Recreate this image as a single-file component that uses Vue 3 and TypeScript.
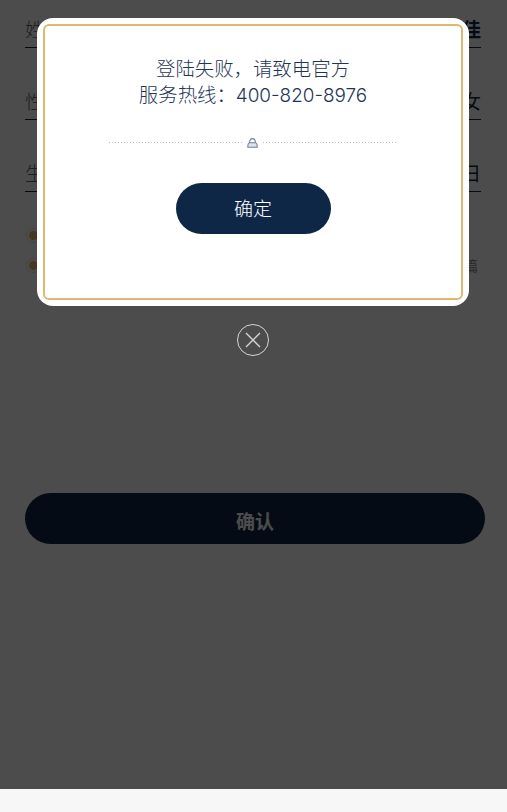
<script setup lang="ts">
const rows = [
  { label: '姓名', value: '王佳', strong: true },
  { label: '性别', value: '女', strong: false },
  { label: '生日', value: '1990年1月1日', strong: false },
]
const agreements = ['我已阅读并同意《用户服务协议》', '我已阅读并同意《隐私保护政策》全篇']
</script>

<template>
  <div class="page">
    <form class="form">
      <div v-for="row in rows" :key="row.label" class="row">
        <span class="label">{{ row.label }}</span>
        <span class="value" :class="{ strong: row.strong }">{{ row.value }}</span>
      </div>
      <div class="agreements">
        <div v-for="a in agreements" :key="a" class="agreement">
          <span class="radio"><span class="dot"></span></span>
          <span class="agreement-text">{{ a }}</span>
        </div>
      </div>
      <button type="button" class="submit">确认</button>
    </form>

    <div class="overlay">
      <div class="dialog">
        <div class="dialog-inner">
          <p class="message">登陆失败，请致电官方<br />服务热线：<span class="phone">400-820-8976</span></p>
          <div class="divider">
            <span class="dots"></span>
            <svg class="bell" width="11" height="10" viewBox="0 0 11 10" fill="none">
              <path d="M2.4 5 L2.9 2.6 Q3.4 .6 5.5 .6 Q7.6 .6 8.1 2.6 L8.6 5" stroke="#71809a" stroke-width="1.1" />
              <path d="M.8 9.2 Q.8 5 2.4 4.7 H8.6 Q10.2 5 10.2 9.2 Z" fill="#dfe3e9" stroke="#71809a" stroke-width="1.1" />
            </svg>
            <span class="dots"></span>
          </div>
          <button type="button" class="ok">确定</button>
        </div>
      </div>
      <button type="button" class="close" aria-label="关闭">
        <svg width="16" height="16" viewBox="0 0 16 16" fill="none">
          <path d="M1 1 L15 15 M15 1 L1 15" stroke="#d4d4d4" stroke-width="1.4" />
        </svg>
      </button>
    </div>
  </div>
</template>

<style scoped>
.page {
  position: relative;
  height: 812px;
  overflow: hidden;
  background: #f7f7f7;
  font-family: Inter, "Noto Sans CJK SC", sans-serif;
}
.form {
  height: 789px;
  padding: 0 26px 0 25px;
  box-sizing: border-box;
  background: #fff;
  display: flex;
  flex-direction: column;
}
.row {
  height: 48px;
  margin-bottom: 24px;
  box-sizing: border-box;
  border-bottom: 1.5px solid #0f2747;
  display: flex;
  justify-content: space-between;
  align-items: center;
  padding-top: 9px;
  font-size: 19px;
  color: #0f2747;
}
.label {
  color: #666;
  font-weight: 300;
}
.value.strong {
  font-weight: 700;
}
.agreements {
  margin-top: 12px;
  display: flex;
  flex-direction: column;
  gap: 16px;
  margin-right: 3px;
}
.agreement {
  height: 14px;
  display: flex;
  align-items: center;
  font-size: 14px;
  color: #888;
  padding-left: 1px;
}
.agreement-text {
  flex: 1;
  white-space: nowrap;
  padding-left: 8px;
}
.agreement:last-child .agreement-text {
  text-align: right;
}
.radio {
  flex: none;
  width: 15px;
  height: 15px;
  box-sizing: border-box;
  border: 1px solid #e8e0c4;
  border-radius: 50%;
  display: flex;
  align-items: center;
  justify-content: center;
}
.dot {
  width: 9px;
  height: 9px;
  border-radius: 50%;
  background: #e0c070;
}
.submit {
  margin-top: 221px;
  width: 460px;
  height: 51px;
  padding: 3px 0 0;
  border: 0;
  border-radius: 26px;
  background: #0f2747;
  color: #fff;
  font: 700 19px Inter, "Noto Sans CJK SC", sans-serif;
}
.overlay {
  position: absolute;
  left: 0;
  top: 0;
  width: 100%;
  height: 789px;
  background: rgba(0, 0, 0, 0.7);
  display: flex;
  flex-direction: column;
  align-items: center;
  padding-top: 18px;
  box-sizing: border-box;
}
.dialog {
  width: 432px;
  height: 288px;
  box-sizing: border-box;
  padding: 6px;
  background: #fff;
  border-radius: 16px;
  margin-right: 1px;
}
.dialog-inner {
  height: 100%;
  box-sizing: border-box;
  border: 2px solid #e0b76f;
  border-radius: 6px;
  display: flex;
  flex-direction: column;
  align-items: center;
  padding-top: 30px;
}
.message {
  margin: 0;
  text-align: center;
  color: #1f3557;
  font-size: 19.4px;
  line-height: 26px;
  font-weight: 200;
}
.phone {
  font-size: 18.9px;
  font-weight: 300;
}
.divider {
  margin-top: 28.5px;
  width: 287px;
  height: 10px;
  display: flex;
  align-items: center;
  gap: 5px;
  margin-right: 1px;
}
.dots {
  flex: 1;
  height: 1px;
  background: repeating-linear-gradient(90deg, #bcc2cc 0 1px, transparent 1px 3px);
}
.bell {
  flex: none;
}
.ok {
  margin-top: 35.5px;
  width: 155px;
  height: 51px;
  padding: 0 0 2px;
  border: 0;
  border-radius: 26px;
  background: #0f2747;
  color: #fff;
  font: 300 19px Inter, "Noto Sans CJK SC", sans-serif;
}
.close {
  margin-top: 18px;
  margin-right: 1px;
  width: 32px;
  height: 32px;
  padding: 0;
  border: 1px solid #d4d4d4;
  border-radius: 50%;
  background: transparent;
  display: flex;
  align-items: center;
  justify-content: center;
}
</style>
